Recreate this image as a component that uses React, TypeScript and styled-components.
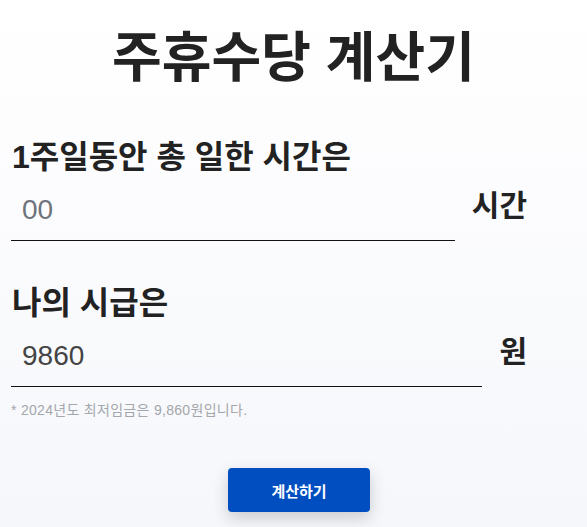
import styled, { createGlobalStyle } from "styled-components";

const GlobalStyle = createGlobalStyle`
  html, body {
    margin: 0;
    padding: 0;
  }
  body {
    min-height: 100vh;
    background: linear-gradient(180deg, #ffffff 0%, #f6f7fb 100%);
    font-family: "Liberation Sans", "Noto Sans CJK KR", sans-serif;
    color: #222222;
  }
`;

const Wrapper = styled.div`
  width: 100%;
  min-height: 527px;
  padding-top: 23px;
  box-sizing: border-box;
`;

const Title = styled.h1`
  margin: 0;
  font-size: 54px;
  line-height: 70px;
  font-weight: 700;
  text-align: center;
  color: #222222;
`;

const Form = styled.form`
  display: flex;
  flex-direction: column;
  padding-left: 11px;
  margin-top: 44px;
`;

const Label = styled.label`
  display: block;
  font-size: 32px;
  line-height: 40px;
  font-weight: 700;
  padding-left: 1px;
  color: #222222;
`;

const Field = styled.div`
  display: flex;
  flex-direction: column;
  & + & {
    margin-top: 42px;
  }
`;

const InputRow = styled.div`
  display: flex;
  align-items: center;
  gap: 17px;
  width: 516px;
  margin-top: 3px;
`;

const Input = styled.input`
  flex: 1;
  min-width: 0;
  height: 61px;
  box-sizing: border-box;
  border: none;
  border-bottom: 1px solid #111111;
  background: transparent;
  padding: 0 0 0 11px;
  font-family: "Liberation Sans", "Noto Sans CJK KR", sans-serif;
  font-size: 28px;
  color: #444444;
  outline: none;
  &::placeholder {
    color: #6e737c;
  }
`;

const Unit = styled.span`
  font-size: 30px;
  font-weight: 700;
  line-height: 40px;
  color: #222222;
  margin-top: -10px;
`;

const Note = styled.p`
  margin: 14px 0 0;
  font-size: 14px;
  line-height: 18px;
  letter-spacing: 0.3px;
  color: #a3a6ab;
`;

const ButtonBox = styled.div`
  display: flex;
  justify-content: center;
  margin-top: 49px;
`;

const Button = styled.button`
  width: 142px;
  height: 44px;
  border: none;
  border-radius: 4px;
  background: #004ec0;
  color: #ffffff;
  font-family: "Liberation Sans", "Noto Sans CJK KR", sans-serif;
  font-size: 15px;
  font-weight: 700;
  box-shadow: 0 6px 16px rgba(0, 0, 0, 0.18);
  cursor: pointer;
`;

function App() {
  return (
    <Wrapper>
      <GlobalStyle />
      <Title>주휴수당 계산기</Title>
      <Form onSubmit={(e) => e.preventDefault()}>
        <Field>
          <Label htmlFor="hours">1주일동안 총 일한 시간은</Label>
          <InputRow>
            <Input id="hours" type="text" placeholder="00" />
            <Unit>시간</Unit>
          </InputRow>
        </Field>
        <Field>
          <Label htmlFor="wage">나의 시급은</Label>
          <InputRow>
            <Input id="wage" type="text" defaultValue="9860" />
            <Unit>원</Unit>
          </InputRow>
          <Note>* 2024년도 최저임금은 9,860원입니다.</Note>
        </Field>
        <ButtonBox>
          <Button type="submit">계산하기</Button>
        </ButtonBox>
      </Form>
    </Wrapper>
  );
}

export default App;
